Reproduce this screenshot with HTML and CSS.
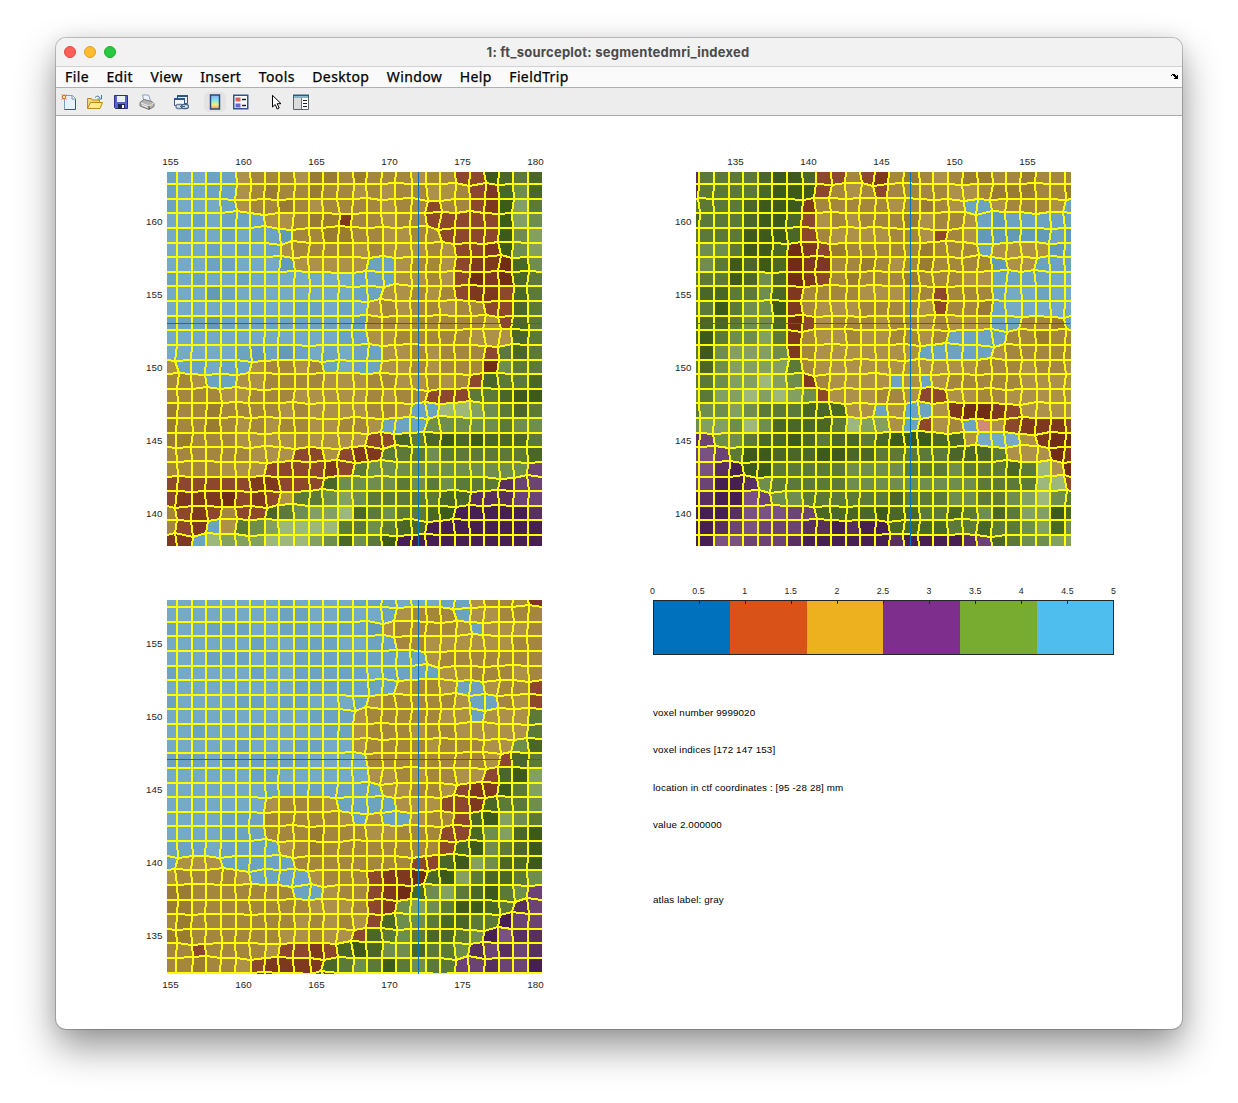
FILE: index.html
```html
<!DOCTYPE html>
<html lang="en">
<head>
<meta charset="utf-8">
<title>1: ft_sourceplot: segmentedmri_indexed</title>
<link rel="stylesheet" href="styles.css">
</head>
<body>
<main class="window">
  <header class="titlebar">
    <span class="light close"></span><span class="light minimize"></span><span class="light zoom"></span>
    <h1 class="title">1: ft_sourceplot: segmentedmri_indexed</h1>
  </header>
  <nav class="menubar">
    <span>File</span><span>Edit</span><span>View</span><span>Insert</span><span>Tools</span><span>Desktop</span><span>Window</span><span>Help</span><span>FieldTrip</span>
    <svg class="dock" width="8" height="6" viewBox="0 0 8 6" shape-rendering="crispEdges"><path d="M1 0h3v1h1v1h1v-1h1v4h-4v-1h1v-1h-1v-1h-1v-1h-1zM0 1h1v1h-1z"/></svg>
  </nav>
  <div class="toolbar">
    <svg class="icon" viewBox="0 0 16 16"><path d="M3.500 1.500h8l3 3v11h-11z" fill="#e6f1fd" stroke="#7f9bc0"/><path d="M3.500 15.500h11v-10" fill="none" stroke="#35598d"/><path d="M11 1.500v3.500h3.500" fill="#fff" stroke="#6f8db5"/><path d="M0 0l6 6M6 0L0 6M3 0v6" stroke="#f0a080"/><circle cx="3" cy="3" r="1.800" fill="#fff0a0" stroke="#d85a32"/></svg>
    <svg class="icon" viewBox="0 0 16 16"><path d="M.5 14.500v-10h4l1 1.500h7v8.500z" fill="#f2d675" stroke="#b88a21"/><path d="M.5 14.500l3-6h12l-2.500 6z" fill="#ffeb8b" stroke="#b88a21"/><path d="M8 3.500q3-3 5 0.500m1.500-3v4h-4" fill="none" stroke="#51749e"/></svg>
    <svg class="icon" viewBox="0 0 16 16"><path d="M1.500 1.500h13v13h-12l-1-1z" fill="#5961cf" stroke="#292f83"/><path d="M4 2h8v6H4z" fill="#e9effb"/><path d="M5 10h7v5H5z" fill="#202754"/><path d="M9 11h2v3H9z" fill="#fff"/></svg>
    <svg class="icon" viewBox="0 0 16 16"><path d="M5 7L3.500 1h6l2 5.500" fill="#edf3ff" stroke="#8d9fbd"/><path d="M1 8.500l4-3 8 2 2 2v3l-5 3-9-3.500z" fill="#b4b4b4" stroke="#777"/><path d="M2 9l8 3 5-3M3 11l7 3" fill="none" stroke="#eee"/><path d="M10 12v3" stroke="#333"/><path d="M12 11h1" stroke="#eb0"/></svg>
    <svg class="icon link" viewBox="0 0 16 16"><path d="M4.500 1.500h10v8h-10z" fill="#e8eef7" stroke="#315488"/><path d="M4 2h11" stroke="#315488" stroke-width="2"/><path d="M1.500 4.500h10v7h-10z" fill="#f5f7fb" stroke="#315488"/><path d="M1 5h11" stroke="#315488" stroke-width="2"/><rect x="3" y="10.500" width="7" height="4" rx="2" fill="#dfe6ee" stroke="#687f9d" stroke-width="1.300"/><rect x="8.500" y="10.500" width="7" height="4" rx="2" fill="#dfe6ee" stroke="#48658a" stroke-width="1.300"/><path d="M7 12.500h5" stroke="#48658a"/></svg>
    <span class="active"><svg class="icon" viewBox="0 0 16 16"><defs><linearGradient id="spectrum" x2="0" y2="1"><stop stop-color="#8faaf5"/><stop offset=".4" stop-color="#84e9e8"/><stop offset=".7" stop-color="#f4ed84"/><stop offset="1" stop-color="#f09379"/></linearGradient></defs><path d="M3.500 1h9v14h-9z" fill="url(#spectrum)" stroke="#294b7e" stroke-width="1.500"/></svg></span>
    <svg class="icon" viewBox="0 0 16 16"><path d="M.75 1.250h14v13.500H.75z" fill="#f8fafe" stroke="#315488" stroke-width="1.500"/><path d="M2.500 3.500h5v4h-5z" fill="#e0605e"/><path d="M2.500 9.500h5v4h-5z" fill="#6463df"/><path d="M9 5.500h4M9 11.500h4" stroke="#222" stroke-width="1.500"/></svg>
    <svg class="icon cursor" viewBox="0 0 16 16"><path d="M4.500 1.300v11.700l2.700-2.500 2 4.500 2-1-2-4.300h3.800z" fill="#fff" stroke="#000"/></svg>
    <svg class="icon" viewBox="0 0 16 16"><path d="M.5 1.500h15v14H.5z" fill="#fff" stroke="#5d6368"/><path d="M0 2h16" stroke="#285f78" stroke-width="3"/><path d="M1 2.500h14" stroke="#83b9d1"/><path d="M1 4h7v11H1z" fill="#dcdcdc"/><path d="M8.500 4v11" stroke="#68747a"/><path d="M10 6.500h4M10 9.500h4M10 12.500h4" stroke="#222"/></svg>
  </div>
  <section class="figure">
    <svg class="plot" id="coronal" width="413" height="400"></svg>
    <svg class="plot sagittal" id="sagittal" width="413" height="400"></svg>
    <svg class="plot" id="axial" width="413" height="420"></svg>
    <div class="panel">
      <svg id="colorbar" width="480" height="80"></svg>
      <div class="info">
        <p>voxel number 9999020</p>
        <p>voxel indices [172 147 153]</p>
        <p>location in ctf coordinates : [95 -28 28] mm</p>
        <p>value 2.000000</p>
        <p></p>
        <p>atlas label: gray</p>
      </div>
    </div>
  </section>
</main>
<script src="plots.js"></script>
</body>
</html>
```
FILE: styles.css
```css
* { box-sizing: border-box; }
body { margin: 0; min-height: 1103px; overflow: hidden; background: #fff; font-family: "Liberation Sans", Arial, sans-serif; }
.window { width: 1126px; height: 991px; margin: 38px 0 0 56px; border-radius: 10px; overflow: hidden; background: #fff; box-shadow: 0 0 0 1px rgba(0,0,0,.2), 0 18px 38px rgba(0,0,0,.42), 0 0 18px rgba(0,0,0,.08); }
.titlebar { display: flex; align-items: center; gap: 8px; height: 29px; padding-left: 8px; background: #f2f2f2; border-bottom: 1px solid #d2d2d2; }
.light { width: 12px; height: 12px; border-radius: 50%; border: 1px solid; }
.close { background: #ff5f57; border-color: #e2463f; }
.minimize { background: #febc2e; border-color: #dfa023; }
.zoom { background: #28c840; border-color: #1dad2b; }
.title { flex: 1; margin: 0 70px 0 0; text-align: center; font: 700 13px/27px Inter, sans-serif; letter-spacing: .25px; color: #4a4a4a; white-space: nowrap; }
.menubar { display: flex; align-items: center; gap: 17.500px; height: 21px; padding: 0 3px 0 9px; background: #fafafa; border-bottom: 1px solid #b0b0b0; font: 400 14px/20px "Noto Sans", sans-serif; letter-spacing: .38px; -webkit-text-stroke: .25px #000; color: #000; }
.dock { margin-left: auto; }
.toolbar { display: flex; align-items: center; gap: 10px; height: 28px; padding: 0 5px; border-bottom: 1px solid #aaa; background: #ededed; }
.icon { width: 16px; height: 16px; flex: none; }
.link { margin-left: 8px; }
.active { display: flex; justify-content: center; align-items: center; width: 22px; height: 20px; margin-left: 5px; margin-right: -3px; border-radius: 5px; background: #e3e3e3; }
.cursor { margin-left: 9px; margin-right: -1px; }
.figure { display: grid; grid-template-columns: 413px 480px; grid-template-rows: 400px 420px; column-gap: 96px; row-gap: 30px; padding: 34px 0 0 81px; }
.plot, #colorbar { display: block; }
.sagittal { margin-left: 20px; }
.panel { display: flex; flex-direction: column; }
.info { padding: 34px 0 0 7px; }
.info p { margin: 0; height: 37.400px; font-size: 9.800px; letter-spacing: .13px; line-height: 37.800px; color: #000; white-space: nowrap; }
.tick { font: 9.800px "Liberation Sans", Arial, sans-serif; letter-spacing: .05px; fill: #262626; }
.tick.small { font-size: 8.800px; letter-spacing: .1px; }
```
FILE: plots.js
```javascript
// Segmentation label plus shade for each voxel
const palette = {
  B: '#75aac7', b: '#6ba3c1', n: '#629ab7', T: '#ae9148', t: '#a4873d', u: '#997c31',
  R: '#8d472c', r: '#7e381f', s: '#702c14', k: '#d08b70',
  1: '#9eb87b', 2: '#84a060', 3: '#6f8d4c', 4: '#5c7938', 5: '#4b6728', 6: '#3e5a1b',
  P: '#7a5282', p: '#6b4473', q: '#573060', v: '#462050'
};
const coronal = `bBBbbTtttTuututttTttRR6545
bBBbbTtuttuttTtTttTTtRr535
bBBBbTttutTttttTttRttRr624
BBbBbbbTTtuurttTttRRRRR623
BbBBbBbbnttuuttTTttRRRR632
BBBbBbBbTttttTtTTTtTRRr632
BBBbbBBBnTTTTTbbTttTRrrs53
bBbBBbBBBBBBBbbbTTtTRsrs54
BBBnbBBBBBBBBbbTTtTtRrrR54
BBbBBBBBBBbbBbBTtTttTttRR54
bbbnbbbbbbbbbnttTtttttTR54
BBBBBBBBBBBBbbTTtttttTTT54
BBBBBbnbnbBbBbbTTtTtttR454
TbbBbbTttTtbBbbTTtTttts344
ttTbbTTttttTTTttTTtTtR5445
ttttTTtttTTTTTtTttRRR44566
uttuttttTtTTTTttTbb1123454
uttutTtTttTTttTbbb33333433
uutttTTTTtTTTTRR5456565554
ttttttTTTRRTRrr44434444445
ttttTTTRRRRrR433333333333p
RRRRRRrrRRR533334343444qpp
RrrrsRrRT443234444455qqqpp
tRrRtRR5432215434456vvvvvq
tRrbT4321111443455vvvvvvvv
rrb1222111235346vvvvvvvvvv`.split('\n');
const sagittal = `q44445665RRtRrtutTtuuttuttt
q44445666RtTtRttttTTtuuuttu
44445666rtttttTtutTbbTtttTb
54445665RTtTtttuTttTbnbbbbb
44446665RtTTTTttTRtTnnnnnbn
4334665srRutttttutttbTTTTnb
4346565srrttutTtuttttnTTbbb
4446535srRtutttutttTTbbbbBB
4554435rttttTTTttRtttbBBbBB
4464336rtTTTttttTRttubBBBBB
5554335sRTtttTttTtTTTbbttub
5643324rtTTtTTttTtbbbbttutt
4632223rtTTTTTTTbbbbbTttttt
45322224tTTTTTTTTTTTtttTttT
44322123rtTTTTbTbTtttttTTTT
342212123RTTTttTRRTTttTTTTT
43323444555TTbTbbTrssrRTTTT
32231355554122TbRTtbkTRrrrR
qp33455654554566655TBBBTrss
pPp4665556655444445554TTTsr
pPqv664444433334443444541Ts
ppvvq344444333333333444411R
vqvvPp334444445444334432134
vvvqPPPpp555565544543542265
vvqpPpppqqvqvv5555445443253
vvPPpppqvvvvvvqvvvvqp543322`.split('\n');
const axial = `BBBBBBBBbBBBBbbbBBBbbTtttr
BBBBBBBBbbBBbBBbTtttbTTttt
bBBbbbBBbbBbbbnTttttTbTTTt
BBBBBBbBBbbbBBbbttTTTTTTtt
BBBbbbBbBbbbbbbbbbTttttttt
bBBBBBbBBbbbbbBbbbbTTtttTt
BBBBBBBBBbbbbbbbTttTbbTttR
bBBBBbbBbbBBBbTtttttTbbtTR
BBBBBBBBBBbbbTtttttTTbTTT4
BBbBBBbBBBBbbTtttTttTTTTT4
BBBBBbBBBbbBBTttttTtttTT35
bbbBbbbbbbBBBBttttttttTR54
BBBBBBbbBBBBBBTTtTttTTR562
BBBBBBBbbbbbbbbTTttTRrr642
BBBBBBBTtttTbbbbTTTRRr5443
BBBBbbbtttttTbTbbTttR56234
BBBBBbbbtttutttTTtttRR53256
bbbBbbbbTtuttttttttR563456
bTTTbbbbbttttttttRR5623556
TttttTbbbbTtttRrrs56245543
uutttttttbbTttRrs53245643p
uuttttttttTTTtRr32346654qp
tutttttttTtTtTR53345544vpp
uuttttttTTtTTR54345543vPqq
ttRttttTRRrR565335443qpqpq
ttuttTRrrrr543464344ppqppv
ttttttrrrr5544444443pqppqv`.split('\n');

const columns = { coronal: 26, sagittal: 27, axial: 26 };
const kind = c => !c ? '' : 'Bbn'.includes(c) ? 'b' : 'Ttu'.includes(c) ? 't' : 'Rrs'.includes(c) ? 'r' : 'Ppqv'.includes(c) ? 'p' : c === 'k' ? 'k' : 'g';

function drawPlot(id, source, opt) {
  const W = 375, H = 374, cols = columns[id];
  // Trim or extend interior runs so that every row spans the full slice
  const rows = source.map(r => {
    while (r.length > cols) r = r.slice(0, 2) + r.slice(3);
    while (r.length < cols) r = r.slice(0, 2) + r[1] + r.slice(2);
    return r;
  });
  const n = rows.length, xs = [0], ys = [0];
  for (let i = 0; i < cols - 1; i++) xs.push(Math.round(opt.x0 + i * 14.625));
  for (let i = 0; i < n - 1; i++) ys.push(Math.round(opt.y0 + i * 14.625));
  xs.push(W); ys.push(H);
  const at = (r, c) => kind((rows[r] || '')[c]);
  let seed = 7;
  const rand = () => (seed = seed * 16807 % 2147483647) / 2147483647 - .5;
  const pts = ys.map((y, r) => xs.map((x, c) => {
    let dx = 0, dy = 0;
    const around = [[r-1,c-1],[r-1,c],[r,c-1],[r,c]].map(q => at(...q));
    const a = rand(), b = rand();
    if (around.every(Boolean)) {
      const mixed = around.some(k => k !== around[0]);
      const near = [[r-2,c-1],[r+1,c],[r-1,c-2],[r,c+1]].some(q => at(...q) && at(...q) !== around[0]);
      if (mixed) {
        const odd = around.findIndex(k => around.filter(j => j === k).length === 1);
        if (odd >= 0) { dx = odd % 2 ? 1.2 : -1.2; dy = odd > 1 ? 1.2 : -1.2; }
        dx += a * 1.6; dy += b * 1.4;
      } else if (near || around[0] === 't') { dx = a * 1.8; dy = b * 1.2; }
    }
    return [Math.round(x + dx), Math.round(y + dy)];
  }));
  let out = '<g shape-rendering="crispEdges">';
  for (let r = 0; r < n; r++) for (let c = 0; c < cols; c++) {
    const p = [pts[r][c], pts[r][c+1], pts[r+1][c+1], pts[r+1][c]];
    out += `<path d="M${p.join('L')}z" fill="${palette[rows[r][c]]}"/>`;
  }
  let lines = '';
  for (let r = 1; r < n; r++) lines += 'M' + pts[r].join('L');
  for (let c = 1; c < cols; c++) lines += 'M' + pts.map(p => p[c]).join('L');
  out += `<path d="${lines}" fill="none" stroke="#ff0" stroke-width="2" stroke-linejoin="round"/>`;
  out += `<path d="M${opt.cx + .5} 0V${H}M0 ${opt.cy + .5}H${W - 1}" stroke="#0072bd"/></g>`;
  let text = '';
  opt.xt.forEach((v, i) => text += `<text class="tick" text-anchor="middle" x="${opt.tx + i * 73}" y="${opt.labelY}">${v}</text>`);
  opt.yt.forEach((v, i) => text += `<text class="tick" text-anchor="end" x="25.500" y="${opt.ty + i * 73}">${v}</text>`);
  document.getElementById(id).innerHTML = `<svg x="30" y="${opt.top}" width="${W}" height="${H}">${out}</svg>${text}`;
}
drawPlot('coronal', coronal, {x0:10, y0:12, cx:251, cy:151, top:22, tx:33.5, labelY:15, ty:75, xt:[155,160,165,170,175,180], yt:[160,155,150,145,140]});
drawPlot('sagittal', sagittal, {x0:3.3, y0:12, cx:214, cy:151, top:22, tx:69.5, labelY:15, ty:75, xt:[135,140,145,150,155], yt:[160,155,150,145,140]});
drawPlot('axial', axial, {x0:10, y0:7, cx:251, cy:159, top:20, tx:33.5, labelY:408, ty:67, xt:[155,160,165,170,175,180], yt:[155,150,145,140,135]});

let bar = '<g shape-rendering="crispEdges">';
['#0072bd','#d95319','#edb120','#7e2f8e','#77ac30','#4dbeee'].forEach((c, i) => {
  const x = Math.round(7 + i * 76.800);
  bar += `<rect x="${x}" y="20" width="${Math.round(7 + (i + 1) * 76.800) - x}" height="55" fill="${c}"/>`;
});
bar += '<path d="M7.500 20.500h460v54h-460z" fill="none" stroke="#262626"/>';
for (let i = 1; i < 10; i++) bar += `<path d="M${Math.floor(7 + i * 46.050) + .5} 20v4" stroke="#262626"/>`;
bar += '</g>';
for (let i = 0; i < 11; i++) bar += `<text class="tick small" text-anchor="middle" x="${6.500 + i * 46.100}" y="14">${i / 2}</text>`;
document.getElementById('colorbar').innerHTML = bar;
```
